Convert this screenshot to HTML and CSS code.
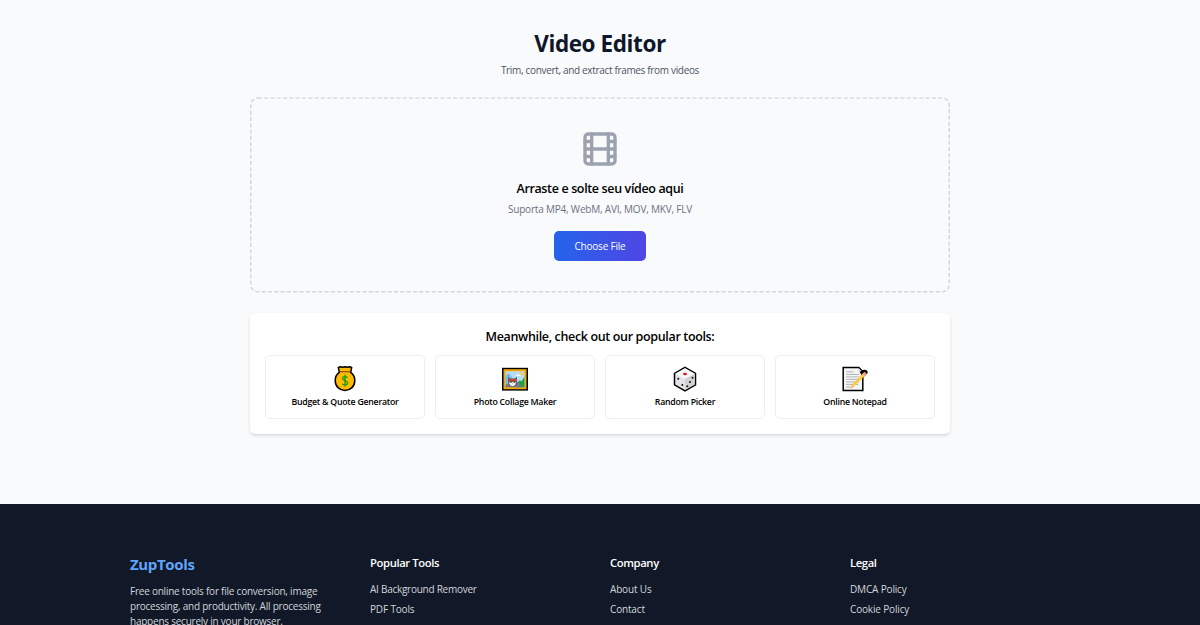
FILE: index.html
```html
<!DOCTYPE html>
<html lang="en">
<head>
<meta charset="utf-8">
<title>Video Editor - ZupTools</title>
<link rel="stylesheet" href="styles.css">
</head>
<body>
<main class="main">
  <header class="intro">
    <h1 class="title">Video Editor</h1>
    <p class="subtitle">Trim, convert, and extract frames from videos</p>
  </header>
  <section class="dropzone">
    <svg class="outline" viewBox="0 0 700 196"><rect x=".8" y="1.1" width="698.4" height="193.7" rx="7" fill="none" stroke="#d1d5db" stroke-width="1.4" stroke-dasharray="4.1 2.2"/></svg>
    <svg class="film" viewBox="0 0 24 24" fill="none" stroke="currentColor" stroke-width="2" stroke-linecap="round" stroke-linejoin="round"><rect x="3" y="3" width="18" height="18" rx="2"/><path d="M7 3v18M17 3v18M3 12h18M3 7.5h4M3 16.5h4M17 7.5h4M17 16.5h4"/></svg>
    <h2 class="drop-title">Arraste e solte seu vídeo aqui</h2>
    <p class="formats">Suporta MP4, WebM, AVI, MOV, MKV, FLV</p>
    <button class="choose">Choose File</button>
  </section>
  <section class="popular">
    <h2 class="popular-title">Meanwhile, check out our popular tools:</h2>
    <div class="tools">
      <a class="tool">
        <svg class="emoji" viewBox="0 0 30 30"><path d="M8.300 3.400 10.500 2.700l2.200.6 2.300-.6 2.300.6 2.200-.6 2.200.7-1 5c2.700 2 4.100 4.700 4.100 8 0 6-4.400 10-9.800 10s-9.800-4-9.800-10c0-3.300 1.400-6 4.100-8z" fill="#ffb900" stroke="#000" stroke-width="1.500" stroke-linejoin="round"/><path d="M9.600 7.700h10.800" stroke="#8f4b0b" stroke-width="1.200"/><path d="M17.500 13.700c-.8-.7-1.600-1-2.600-1-1.400 0-2.300.8-2.300 1.900 0 2.700 5 1.300 5 4.200 0 1.300-1 2.100-2.500 2.100-1.100 0-2.100-.4-2.800-1M15 10.800v12" fill="none" stroke="#10a01a" stroke-width="1.300"/></svg>
        <span class="label budget">Budget &amp; Quote Generator</span>
      </a>
      <a class="tool">
        <svg class="emoji" viewBox="0 0 30 30"><rect x="2" y="3.800" width="26" height="22.800" fill="#000"/><rect x="3.500" y="5.200" width="23" height="20" fill="#f7a500"/><rect x="5.500" y="7.200" width="19" height="16" fill="#b7dcf4"/><path d="m5.500 12 3-3 4 5v7h-7z" fill="#75b9e7"/><circle cx="21.300" cy="9.700" r="1.600" fill="#ffc83d"/><path d="M16.500 10.500h4v1.600h-5z" fill="#f2f9ff"/><path d="m15 23.200 4.500-7 2 1 3-4.500v10.500z" fill="#16a34a"/><path d="M5.500 20.500c7-1 10-4.500 13-2.500 2 1.500 2 3.500 3 5.200h-16z" fill="#737b83"/><path d="m8 12.800 2.500 1.700h4l2.500-1.700v6c0 3-2 3.700-4.500 3.700S8 21.800 8 18.800z" fill="#666"/><path d="M8 15.500h9v1.600H8z" fill="#de352d"/><path d="M9.300 18h6.400c0 2.700-1 4-3.200 4s-3.200-1.300-3.200-4z" fill="#fff"/><path d="M10.500 17.600h1v1.300h-1zM13.700 17.600h1v1.300h-1z" fill="#222"/><path d="M12 19.300h1.200v1H12z" fill="#d88c82"/></svg>
        <span class="label photo">Photo Collage Maker</span>
      </a>
      <a class="tool">
        <svg class="emoji" viewBox="0 0 30 30"><path d="m15 3.400 10.500 6v11.400L15 26.900 4.500 20.800V9.400z" fill="#e3e4e6" stroke="#000" stroke-width="1.500"/><path d="m5.300 9.800 9.700 5.200 9.700-5.200L15 4.300z" fill="#f8f8f8"/><path d="M15 15v11l9.700-5.600V9.800z" fill="#d0d1d4"/><ellipse cx="15" cy="10" rx="1.900" ry="1.200" fill="#df1024"/><g fill="#111"><circle cx="8.300" cy="14.800" r="1"/><circle cx="12.300" cy="21" r="1"/><circle cx="22.500" cy="13.800" r="1"/><circle cx="20" cy="18" r="1"/><circle cx="17.300" cy="22.300" r="1"/></g></svg>
        <span class="label random">Random Picker</span>
      </a>
      <a class="tool">
        <svg class="emoji" viewBox="0 0 30 30"><path d="M3.200 3.600h15.600l4 3.900v19.100H3.200z" fill="#f3f4f6" stroke="#000" stroke-width="1.500"/><path d="M18.600 4v4h4z" fill="#d1d5db"/><path d="M6 7.800h7M6 10.400h13M6 12.900h13M6 15.400h13M6 17.900h13M6 20.400h12M6 23h4" stroke="#a5a8ac" stroke-width=".85"/><path d="m20 8.500 3-1.900c2-1 4.400.4 4.100 2.100l-4.300 4.500" fill="#000" stroke="#000" stroke-width="1.200"/><path d="m10.500 24.500.8-3L23.500 8.800l2.200 2.100-12.400 12.200z" fill="#ffc83d"/><path d="m22.500 9.800 2-2 2.200 2-2 2.100z" fill="#ef9b8f"/><path d="m10.100 24.700 1-3.100 2.100 1.800z" fill="#e8b794"/></svg>
        <span class="label notepad">Online Notepad</span>
      </a>
    </div>
  </section>
</main>
<footer class="footer">
  <div class="footer-grid">
    <div>
      <h2 class="brand">ZupTools</h2>
      <p class="about">Free online tools for file conversion, image<br>processing, and productivity. All processing<br>happens securely in your browser.</p>
    </div>
    <nav><h3 class="heading">Popular Tools</h3><a class="link remover">AI Background Remover</a><a class="link">PDF Tools</a></nav>
    <nav><h3 class="heading">Company</h3><a class="link">About Us</a><a class="link">Contact</a></nav>
    <nav><h3 class="heading">Legal</h3><a class="link">DMCA Policy</a><a class="link">Cookie Policy</a></nav>
  </div>
</footer>
</body>
</html>
```
FILE: styles.css
```css
* { box-sizing: border-box; margin: 0; padding: 0; }
html, body { height: 625px; overflow: hidden; }
body { background: #f9fafc; color: #000; font-family: "Open Sans", "Noto Sans", sans-serif; font-size: 10px; line-height: 15px; }
h1, h2, h3 { white-space: nowrap; }
.main { width: 700px; height: 504px; margin: 0 auto; padding-top: 30px; }
.intro { height: 67px; text-align: center; }
.title { font-size: 22.5px; line-height: 28px; font-weight: 700; color: #0f172a; letter-spacing: -.4px; }
.subtitle { margin-top: 5px; color: #4b5563; letter-spacing: -.33px; }
.dropzone { position: relative; height: 196px; display: flex; flex-direction: column; align-items: center; padding-top: 32px; }
.outline { position: absolute; inset: 0; width: 700px; height: 196px; }
.film { width: 40px; height: 40px; color: #9ca3af; flex: none; }
.drop-title { margin-top: 11px; font-size: 12.5px; line-height: 18px; font-weight: 600; letter-spacing: -.36px; }
.formats { margin-top: 4px; color: #6b7280; letter-spacing: -.2px; }
.choose { margin-top: 14px; width: 92px; height: 30px; border: 0; border-radius: 5px; background: linear-gradient(90deg, #2563eb, #4f46e5); color: #fff; font: 500 10px/30px "Open Sans", sans-serif; letter-spacing: -.2px; }
.popular { height: 121px; margin-top: 20px; background: #fff; border-radius: 5px; padding: 15px; box-shadow: 0 2px 4px -1px rgba(0,0,0,.16), 0 1px 2px -1px rgba(0,0,0,.1); }
.popular-title { text-align: center; font-size: 12.5px; line-height: 18px; font-weight: 600; letter-spacing: -.35px; }
.tools { display: grid; grid-template-columns: repeat(4, 1fr); gap: 10px; margin-top: 9px; }
.tool { height: 64px; border: 1px solid #eceef1; border-radius: 5px; display: flex; flex-direction: column; align-items: center; padding-top: 8px; }
.emoji { width: 30px; height: 30px; flex: none; }
.label { font-size: 8.75px; line-height: 12px; font-weight: 600; margin-top: 2px; white-space: nowrap; letter-spacing: -.25px; }
.footer { height: 121px; background: #111827; padding-top: 50px; }
.footer-grid { width: 940px; margin: 0 auto; display: grid; grid-template-columns: repeat(4, 220px); gap: 20px; }
.brand { font-size: 15px; line-height: 21px; color: #60a5fa; font-weight: 700; letter-spacing: -.35px; }
.about { margin-top: 9px; color: #d1d5db; white-space: nowrap; letter-spacing: -.23px; }
.heading { font-size: 11.25px; line-height: 17px; color: #fff; font-weight: 600; margin-bottom: 11px; letter-spacing: -.38px; }
.link { display: block; color: #d1d5db; margin-bottom: 5px; letter-spacing: -.16px; }
.remover { letter-spacing: -.26px; }
```
